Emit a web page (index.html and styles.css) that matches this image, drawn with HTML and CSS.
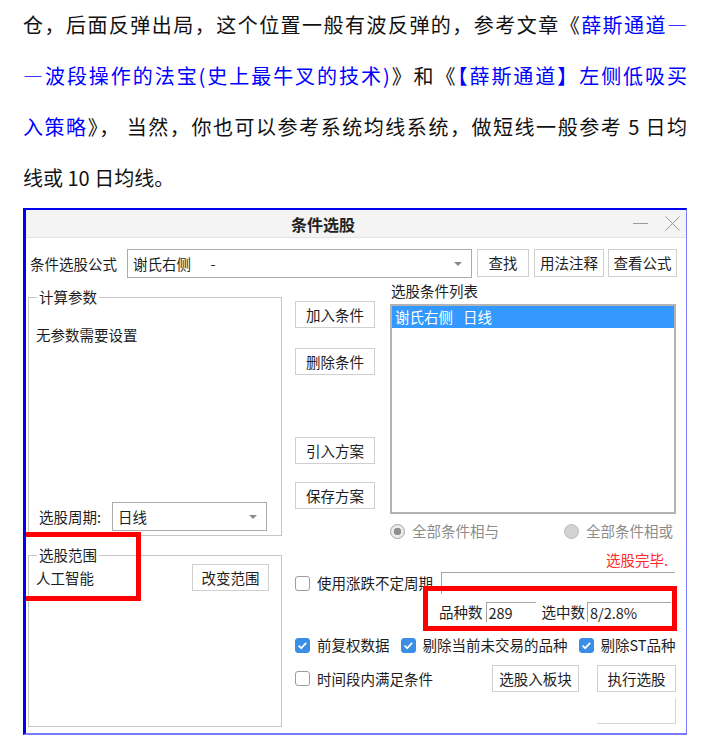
FILE: index.html
```html
<!DOCTYPE html>
<html lang="zh-CN">
<head>
<meta charset="utf-8">
<title>条件选股</title>
<link rel="stylesheet" href="styles.css">
</head>
<body>
<p class="article">
<span class="ln">仓，后面反弹出局，这个位置一般有波反弹的，参考文章《<a class="lk">薛斯通道—</a></span>
<span class="ln"><a class="lk">—波段操作的法宝(史上最牛叉的技术)</a>》和《<a class="lk">【薛斯通道】左侧低吸买</a></span>
<span class="ln"><a class="lk">入策略</a>》， 当然，你也可以参考系统均线系统，做短线一般参考 5 日均</span>
<span class="ln last">线或 10 日均线。</span>
</p>

<div class="dlg">
  <div class="titlebar">
    <span class="title">条件选股</span>
    <span class="winbtns">
      <svg class="wb" width="15" height="15" viewBox="0 0 15 15"><path d="M0 7.5H15" stroke="#9a9a9a" stroke-width="1"/></svg>
      <svg class="wb" width="15" height="15" viewBox="0 0 15 15"><path d="M0.5 0.5L14.5 14.5M14.5 0.5L0.5 14.5" stroke="#9a9a9a" stroke-width="1"/></svg>
    </span>
  </div>
  <div class="dbody">
    <div class="row1">
      <span class="lbl">条件选股公式</span>
      <div class="combo wide"><span class="ctext">谢氏右侧      -</span><i class="caret"></i></div>
      <button class="btn b-find">查找</button>
      <button class="btn b-note">用法注释</button>
      <button class="btn b-view">查看公式</button>
    </div>
    <div class="main">
      <div class="leftcol">
        <fieldset class="grp grp1">
          <legend>计算参数</legend>
          <div class="gbody gbody1">
            <div class="noparam">无参数需要设置</div>
            <div class="period">
              <span class="plbl">选股周期:</span>
              <div class="combo small"><span class="ctext">日线</span><i class="caret"></i></div>
            </div>
          </div>
        </fieldset>
        <fieldset class="grp grp2">
          <legend>选股范围</legend>
          <div class="gbody gbody2">
            <div class="range">
              <span>人工智能</span>
              <button class="btn b-range">改变范围</button>
            </div>
          </div>
        </fieldset>
      </div>
      <div class="rightarea">
        <div class="upper">
          <div class="midcol">
            <button class="btn mb mb1">加入条件</button>
            <button class="btn mb mb2">删除条件</button>
            <button class="btn mb mb3">引入方案</button>
            <button class="btn mb mb4">保存方案</button>
          </div>
          <div class="listcol">
            <div class="listlbl">选股条件列表</div>
            <div class="listbox">
              <div class="sel"><span>谢氏右侧</span><span class="sel-p">日线</span></div>
            </div>
            <div class="radios">
              <span class="radio"><i class="rdot on"></i>全部条件相与</span>
              <span class="radio"><i class="rdot off"></i>全部条件相或</span>
            </div>
          </div>
        </div>
        <div class="done">选股完毕.</div>
        <div class="r-cycle">
          <span class="chk"><i class="cb"></i>使用涨跌不定周期</span>
          <span class="cycbox"></span>
        </div>
        <div class="r-count">
          <span class="cnt-l1">品种数</span>
          <span class="numbox nb1">289</span>
          <span class="cnt-l2">选中数</span>
          <span class="numbox nb2">8/2.8%</span>
        </div>
        <div class="r-checks">
          <span class="chk"><i class="cb on"><svg width="13" height="13" viewBox="0 0 13 13"><path d="M2.6 6.6l2.6 2.6 5-5.4" fill="none" stroke="#fff" stroke-width="1.7"/></svg></i>前复权数据</span>
          <span class="chk"><i class="cb on"><svg width="13" height="13" viewBox="0 0 13 13"><path d="M2.6 6.6l2.6 2.6 5-5.4" fill="none" stroke="#fff" stroke-width="1.7"/></svg></i>剔除当前未交易的品种</span>
          <span class="chk"><i class="cb on"><svg width="13" height="13" viewBox="0 0 13 13"><path d="M2.6 6.6l2.6 2.6 5-5.4" fill="none" stroke="#fff" stroke-width="1.7"/></svg></i>剔除ST品种</span>
        </div>
        <div class="r-actions">
          <span class="chk"><i class="cb"></i>时间段内满足条件</span>
          <button class="btn b-add">选股入板块</button>
          <button class="btn b-run">执行选股</button>
        </div>
        <div class="r-empty"></div>
      </div>
    </div>
  </div>
  <div class="hl hl1"></div>
  <div class="hl hl2"></div>
</div>
</body>
</html>
```

FILE: styles.css
```css
* { box-sizing: border-box; }
html, body { margin: 0; padding: 0; background: #fff; }
body { font-family: "Noto Sans CJK SC", "Noto Sans", sans-serif; }

.article {
  margin: -1px 0 0;
  padding: 0 23px;
  font-size: 20px;
  line-height: 51px;
  color: #111;
}
.ln { display: block; text-align: justify; text-align-last: justify; }
.ln.last { text-align: left; text-align-last: left; }
.lk { color: #0000ff; text-decoration: none; }

.dlg {
  position: relative;
  margin: 5px 0 0 23px;
  width: 664px;
  border-style: solid;
  border-color: #0000f0 #7b7bff #7b7bff #0000f0;
  border-width: 2px 1px 2px 3px;
  background: #fff;
  font-size: 14.5px;
  line-height: 18px;
  color: #1e1e1e;
}

.titlebar {
  height: 28px;
  display: flex;
  align-items: center;
  background: #f4f4f4;
  border-bottom: 1px solid #e2e2e2;
}
.title { flex: 1; text-align: center; font-weight: bold; font-size: 16px; color: #222; }
.winbtns { width: 66px; display: flex; align-items: center; padding-left: 13px; gap: 17px; }
.wb { display: block; }

.dbody { padding: 11px 9px 6px 2px; }

.row1 { display: flex; align-items: flex-start; height: 29px; }
.row1 .lbl { width: 97px; margin-left: 2px; line-height: 29px; }

.combo {
  height: 29px;
  border: 1px solid #ababab;
  display: flex;
  align-items: center;
  padding-left: 5px;
  background: #fff;
}
.combo.wide { width: 345px; }
.combo.small { width: 155px; }
.ctext { white-space: pre; }
.caret {
  margin-left: auto;
  margin-right: 9px;
  width: 0; height: 0;
  border-left: 4px solid transparent;
  border-right: 4px solid transparent;
  border-top: 4px solid #8a8a8a;
}

.btn {
  height: 28px;
  border: 1px solid #cfcfcf;
  background: #fff;
  font: inherit;
  color: inherit;
  padding: 0;
  line-height: 26px;
  flex: none;
}
.b-find { width: 52px; margin-left: 5px; }
.b-note { width: 70px; margin-left: 5px; }
.b-view { width: 69px; margin-left: 4px; }

.main { display: flex; margin-top: 4px; gap: 13px; }
.leftcol { width: 254px; flex: none; }

.grp { margin: 0; padding: 0; border: 1px solid #c6c6c6; min-width: 0; }
.grp legend { padding: 0 2px; margin-left: 8px; line-height: 18px; font-size: 14.5px; }
.grp1 { margin-top: 6px; height: 248px; }
.grp2 { margin-top: 10px; height: 181px; }

.gbody { padding-left: 7px; }
.gbody1 { display: flex; flex-direction: column; height: 229px; }
.noparam { margin-top: 20px; }
.period { margin-top: auto; margin-bottom: 4px; display: flex; align-items: center; padding-left: 3px; }
.plbl { width: 73px; }

.range { display: flex; align-items: center; justify-content: space-between; height: 27px; padding-right: 12px; }
.b-range { width: 77px; height: 27px; }

.rightarea { width: 382px; flex: none; display: flex; flex-direction: column; }
.upper { display: flex; gap: 15px; height: 258px; }
.midcol { width: 80px; display: flex; flex-direction: column; }
.mb { width: 80px; height: 27px; line-height: 25px; }
.mb1 { margin-top: 19px; }
.mb2 { margin-top: 20px; }
.mb3 { margin-top: 62px; }
.mb4 { margin-top: 18px; }

.listcol { width: 286px; display: flex; flex-direction: column; }
.listlbl { height: 18px; padding-left: 1px; }
.listbox { margin-top: 4px; height: 210px; border: 2px solid #b3b3b3; background: #fff; }
.sel { height: 22px; line-height: 22px; background: #3399ff; color: #fff; padding-left: 3px; }
.sel-p { margin-left: 10px; }

.radios { margin-top: 8px; height: 18px; display: flex; justify-content: space-between; padding-right: 3px; color: #8c8c8c; }
.radio { display: flex; align-items: center; gap: 7px; }
.rdot { display: block; width: 15px; height: 15px; border-radius: 50%; flex: none; }
.rdot.on { border: 1px solid #a3a3a3; background: radial-gradient(circle, #8f8f8f 0 3.5px, #ececec 4px); }
.rdot.off { border: 1px solid #bdbdbd; background: #d2d2d2; }

.done { margin-top: 11px; height: 18px; text-align: right; padding-right: 9px; color: #ff2b2b; }

.chk { display: flex; align-items: center; gap: 7px; }
.cb {
  display: flex;
  align-items: center;
  justify-content: center;
  width: 15px; height: 15px;
  border: 1px solid #9d9d9d;
  border-radius: 3px;
  background: #fff;
  flex: none;
}
.cb.on { background: #3a8ee6; border-color: #3a8ee6; }
.cb svg { display: block; }

.r-cycle { margin-top: 3px; height: 22px; display: flex; align-items: center; }
.cycbox { margin-left: auto; margin-right: 2px; width: 234px; height: 22px; border-top: 1px solid #a5a5a5; border-left: 1px solid #a5a5a5; }

.r-count { margin-top: 8px; height: 20px; display: flex; align-items: center; }
.cnt-l1 { margin-left: 144px; }
.numbox { height: 20px; line-height: 19px; padding-left: 2px; border-top: 1px solid #a5a5a5; border-left: 1px solid #a5a5a5; }
.nb1 { width: 50px; margin-left: 3px; }
.cnt-l2 { margin-left: 6px; }
.nb2 { width: 84px; margin-left: 2px; }

.r-checks { margin-top: 13px; height: 20px; display: flex; align-items: center; gap: 11px; }

.r-actions { margin-top: 10px; height: 27px; display: flex; align-items: center; }
.b-add { width: 87px; height: 27px; margin-left: auto; }
.b-run { width: 79px; height: 27px; margin-left: 18px; margin-right: 1px; }

.r-empty { margin-top: 6px; height: 26px; width: 79px; align-self: flex-end; margin-right: 1px; border-right: 1px solid #d6d6d6; border-bottom: 1px solid #d6d6d6; }

.hl { position: absolute; border: 5px solid #ff0000; }
.hl1 { left: 0; top: 322px; width: 115px; height: 69px; border-left: 0; }
.hl2 { left: 397px; top: 376px; width: 254px; height: 45px; }
```
